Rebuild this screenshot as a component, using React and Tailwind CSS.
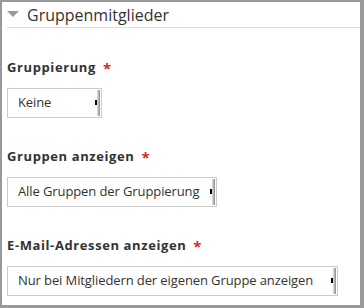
import React from "react";

const Field = ({ label, value, width }) => (
  <div className="flex flex-col">
    <div className="flex items-center h-5 text-[13px] font-bold tracking-[0.6px] text-[#333]">
      {label}
      <span className="ml-[7px] text-[#ca3120] text-[15px] leading-none">*</span>
    </div>
    <div
      className="mt-[10px] h-[30px] flex items-center border border-[#ccc] bg-white"
      style={{ width }}
    >
      <span className="flex-1 pl-[10px] text-[13px] tracking-[-0.1px] text-[#333] whitespace-nowrap">{value}</span>
      <div className="relative h-[26px] w-[3px] mr-[1px] bg-gradient-to-r from-[#e5e5e5] to-[#8a8a8a]">
        <div className="absolute left-[-2px] top-[10px] w-[2px] h-[5px] bg-black" />
      </div>
    </div>
  </div>
);

const App = () => {
  return (
    <div
      className="w-[364px] h-[308px] box-border bg-white border-t-2 border-l-2 border-r-4 border-b-[3px] border-[#999] overflow-hidden"
      style={{ fontFamily: '"Open Sans", "Noto Sans", sans-serif' }}
    >
      <div className="ml-[5px] h-[26px] flex items-center border-b border-[#ddd]">
        <svg width="12" height="7" viewBox="0 0 12 7" className="mr-[8px]">
          <polygon points="0,0 12,0 6,6" fill="#999" />
        </svg>
        <span className="text-[16px] text-[#333]">Gruppenmitglieder</span>
      </div>
      <div className="pl-[5px] pt-[30px] flex flex-col gap-[29px]">
        <Field label="Gruppierung" value="Keine" width="95px" />
        <Field label="Gruppen anzeigen" value="Alle Gruppen der Gruppierung" width="210px" />
        <Field label="E-Mail-Adressen anzeigen" value="Nur bei Mitgliedern der eigenen Gruppe anzeigen" width="331px" />
      </div>
    </div>
  );
};

export default App;
